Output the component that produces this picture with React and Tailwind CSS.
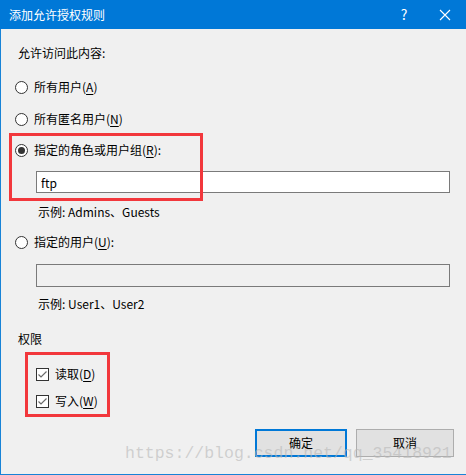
import { useState } from 'react';

const font = { fontFamily: '"Noto Sans CJK SC", "Noto Sans", sans-serif' };

const Hotkey = ({ text, letter, suffix = "" }) => (
    <span>
        {text}(<span className="underline underline-offset-[2px] decoration-1">{letter}</span>){suffix}
    </span>
);

const Radio = ({ checked, children, onClick }) => (
    <div className="flex flex-row items-center h-[16px] ml-[14px] gap-[6px] cursor-default" onClick={onClick}>
        <div className="w-[13px] h-[13px] rounded-full border border-[#333] bg-white flex items-center justify-center">
            {checked && <div className="w-[7px] h-[7px] rounded-full bg-[#333]" />}
        </div>
        <div className="leading-[16px]">{children}</div>
    </div>
);

const Checkbox = ({ checked, children }) => (
    <div className="flex flex-row items-center h-[16px] ml-[35px] gap-[6px]">
        <div className="w-[13px] h-[13px] border border-[#333] bg-white flex items-center justify-center">
            {checked && (
                <svg width="11" height="11" viewBox="0 0 11 11">
                    <polyline points="1.5,5.5 4,8 9.5,2.5" fill="none" stroke="#6b6b6b" strokeWidth="1.2" />
                </svg>
            )}
        </div>
        <div className="leading-[16px]">{children}</div>
    </div>
);

const App = () => {
    const [mode, setMode] = useState("role");
    const [role, setRole] = useState("ftp");

    return (
        <div className="relative w-[466px] h-[475px] flex flex-col bg-[#f0f0f0] text-[12px] text-black overflow-hidden" style={font}>
            <div className="h-[29px] bg-[#0078d7] flex flex-row items-center text-white">
                <span className="ml-[9px] leading-[16px]">添加允许授权规则</span>
                <span className="ml-auto w-[20px] text-center text-[14px] mr-[25px]">?</span>
                <svg width="12" height="12" viewBox="0 0 12 12" className="mr-[15px]">
                    <path d="M1 1 L11 11 M11 1 L1 11" stroke="white" strokeWidth="1.1" />
                </svg>
            </div>
            <div className="flex-1 flex flex-col border-l border-b border-[#1883d7]">
                <p className="mt-[16px] ml-[17px] leading-[16px]">允许访问此内容:</p>
                <div className="mt-[18px]">
                    <Radio checked={mode === "all"} onClick={() => setMode("all")}>
                        <Hotkey text="所有用户" letter="A" />
                    </Radio>
                </div>
                <div className="mt-[16px]">
                    <Radio checked={mode === "anon"} onClick={() => setMode("anon")}>
                        <Hotkey text="所有匿名用户" letter="N" />
                    </Radio>
                </div>
                <div className="mt-[15px]">
                    <Radio checked={mode === "role"} onClick={() => setMode("role")}>
                        <Hotkey text="指定的角色或用户组" letter="R" suffix=":" />
                    </Radio>
                </div>
                <input
                    value={role}
                    onChange={(e) => setRole(e.target.value)}
                    className="mt-[13px] ml-[35px] w-[414px] h-[22px] border border-[#7a7a7a] bg-white px-[4px] text-[12px] outline-none"
                    style={font}
                />
                <p className="mt-[11px] ml-[37px] leading-[16px]">示例: Admins、Guests</p>
                <div className="mt-[14px]">
                    <Radio checked={mode === "user"} onClick={() => setMode("user")}>
                        <Hotkey text="指定的用户" letter="U" suffix=":" />
                    </Radio>
                </div>
                <div className="mt-[14px] ml-[35px] w-[414px] h-[23px] border border-[#7a7a7a] bg-[#f0f0f0]" />
                <p className="mt-[9px] ml-[37px] leading-[16px]">示例: User1、User2</p>
                <p className="mt-[19px] ml-[17px] leading-[16px]">权限</p>
                <div className="mt-[19px]">
                    <Checkbox checked>
                        <Hotkey text="读取" letter="D" />
                    </Checkbox>
                </div>
                <div className="mt-[11px]">
                    <Checkbox checked>
                        <Hotkey text="写入" letter="W" />
                    </Checkbox>
                </div>
                <div className="mt-[20px] flex flex-row justify-end gap-[9px] pr-[12px]">
                    <button className="w-[92px] h-[28px] border-2 border-[#0078d7] bg-[#e1e1e1] text-[12px]" style={font}>确定</button>
                    <button className="w-[98px] h-[28px] border border-[#adadad] bg-[#e1e1e1] text-[12px]" style={font}>取消</button>
                </div>
            </div>

            {/* annotation boxes */}
            <div className="absolute left-[9px] top-[133px] w-[194px] h-[68px] border-[3px] border-[#f2373c] pointer-events-none" />
            <div className="absolute left-[25px] top-[352px] w-[85px] h-[65px] border-[3px] border-[#f2373c] pointer-events-none" />

            {/* watermark */}
            <div
                className="absolute left-[125px] top-[444px] text-[16.5px] leading-[20px] text-[#b8b8b8]/60 pointer-events-none whitespace-nowrap"
                style={{ fontFamily: '"Liberation Mono", monospace' }}
            >
                https://blog.csdn.net/qq_35418921
            </div>
        </div>
    );
};

export default App;
